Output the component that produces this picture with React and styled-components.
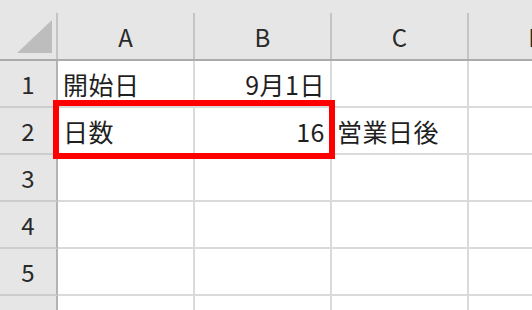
import React from "react";
import styled, { createGlobalStyle } from "styled-components";

const GlobalStyle = createGlobalStyle`
  html, body {
    margin: 0;
    padding: 0;
    background: #ffffff;
    overflow: hidden;
  }
  body {
    font-family: "Noto Sans CJK JP", "Noto Sans", sans-serif;
  }
`;

const columns = ["A", "B", "C", "D"];

const cells = [
  ["開始日", "9月1日", "", ""],
  ["日数", "16", "営業日後", ""],
  ["", "", "", ""],
  ["", "", "", ""],
  ["", "", "", ""],
  ["", "", "", ""],
];

// B列は右寄せ（日付・数値）
const alignOf = (col) => (col === 1 ? "right" : "left");

export default function App() {
  return (
    <>
      <GlobalStyle />
      <Sheet>
        <HeaderRow>
          <Corner>
            <svg width="35" height="33" viewBox="0 0 35 33">
              <polygon points="0,33 35,0 35,33" fill="#bdbdbd" />
            </svg>
          </Corner>
          {columns.map((c) => (
            <ColHead key={c}>{c}</ColHead>
          ))}
        </HeaderRow>
        {cells.map((row, r) => (
          <Row key={r}>
            <RowHead>{r + 1}</RowHead>
            {row.map((v, c) => (
              <Cell key={c} $align={alignOf(c)}>
                {v}
              </Cell>
            ))}
          </Row>
        ))}
        <Highlight $left={53} $top={100} $width={282} $height={59} />
      </Sheet>
    </>
  );
}

const Sheet = styled.div`
  position: relative;
  width: 532px;
  height: 310px;
  overflow: hidden;
`;

const gridCols = `58px 137px 137px 137px 137px`;

const HeaderRow = styled.div`
  display: grid;
  grid-template-columns: ${gridCols};
  width: 606px;
  height: 61px;
  box-sizing: border-box;
  padding-top: 13px;
  background: #e6e6e6;
  border-bottom: 2px solid #ababab;
`;

const Corner = styled.div`
  display: flex;
  align-items: flex-end;
  justify-content: flex-end;
  padding: 0 4px 6px 0;
  border-right: 2px solid #c4c4c4;
`;

const ColHead = styled.div`
  display: flex;
  align-items: center;
  justify-content: center;
  border-right: 2px solid #c4c4c4;
  font-size: 24px;
  color: #2a2a2a;
  white-space: nowrap;
`;

const Row = styled.div`
  display: grid;
  grid-template-columns: ${gridCols};
  width: 606px;
  height: 47px;
`;

const RowHead = styled.div`
  display: flex;
  align-items: center;
  justify-content: center;
  background: #e6e6e6;
  border-right: 2px solid #b3b3b3;
  border-bottom: 2px solid #cdcdcd;
  font-size: 24px;
  color: #2a2a2a;
`;

const Cell = styled.div`
  display: flex;
  align-items: center;
  justify-content: ${(p) => (p.$align === "right" ? "flex-end" : "flex-start")};
  padding: 0 5px;
  border-right: 2px solid #dadada;
  border-bottom: 2px solid #dadada;
  font-size: 25px;
  letter-spacing: 0.5px;
  color: #1f1f1f;
  white-space: nowrap;
  overflow: visible;
`;

const Highlight = styled.div`
  position: absolute;
  left: ${(p) => p.$left}px;
  top: ${(p) => p.$top}px;
  width: ${(p) => p.$width}px;
  height: ${(p) => p.$height}px;
  box-sizing: border-box;
  border: 6px solid #ff0000;
  pointer-events: none;
`;
